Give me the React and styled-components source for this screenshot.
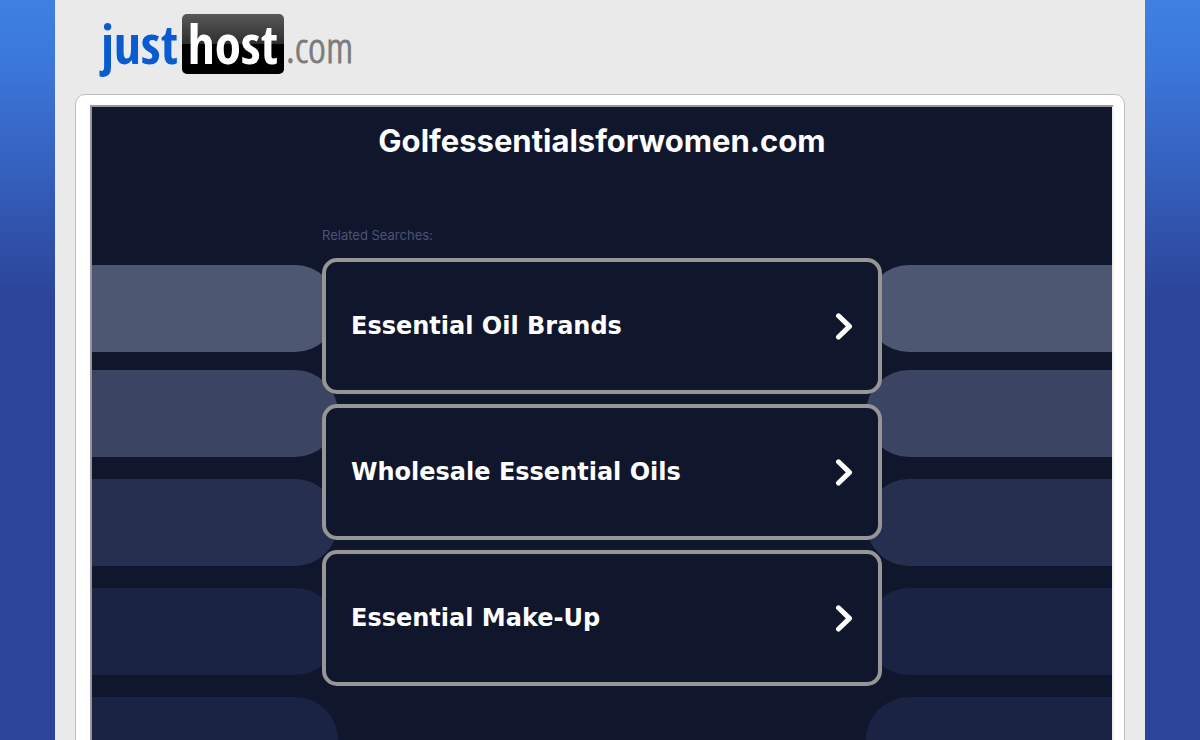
import styled, { createGlobalStyle } from "styled-components";

const GlobalStyle = createGlobalStyle`
  * {
    box-sizing: border-box;
  }

  body {
    margin: 0;
    background-color: #2c4499;
  }
`;

const Page = styled.div`
  display: flex;
  height: 100vh;
  overflow: hidden;
  padding: 0 55px;
  background: linear-gradient(#3f80e3 0, #3c78dc 60px, #2c4499 300px);
`;

const Shell = styled.div`
  flex: 1;
  min-width: 0;
  max-width: 1280px;
  margin: 0 auto;
  padding: 14px 20px 0;
  background-color: #eaeaea;
`;

const Logo = styled.a`
  display: flex;
  height: 60px;
  margin: 0 0 20px 26px;
  font-family: "Open Sans Condensed", "DejaVu Sans Condensed", sans-serif;
  font-size: 53px;
  font-weight: 500;
  line-height: 60px;
  text-decoration: none;
`;

const LogoJust = styled.span`
  color: #0a5bd0;
  margin-right: 4px;
`;

const LogoHost = styled.span`
  padding: 0 6px;
  border-radius: 5px;
  color: #fff;
  background: linear-gradient(#585858 0, #2e2e2e 50%, #000 50%);
`;

const LogoCom = styled.span`
  margin-left: 2px;
  color: #7c7c7c;
  font-family: "Open Sans Condensed Light", "DejaVu Sans Condensed", sans-serif;
  font-size: 43px;
  font-weight: 400;
  line-height: 66px;
  -webkit-text-stroke: 1px #7c7c7c;
`;

const Card = styled.main`
  padding: 10px 10px 10px 14px;
  border: 1px solid #bebebe;
  border-radius: 10px;
  background-color: #fff;
`;

const Frame = styled.div`
  position: relative;
  min-height: 760px;
  border: 2px solid;
  border-color: #94969a #eee #eee #94969a;
  background-color: #10162b;
`;

/* striped pills behind the list */
const Backdrop = styled.div`
  position: absolute;
  inset: 0;
  overflow: hidden;
  display: flex;
  flex-direction: column;
  gap: 22px;
  padding-top: 158px;
`;

const Stripe = styled.div`
  flex: none;
  display: flex;
  justify-content: space-between;
  height: 87px;
  margin-bottom: ${(props) => (props.$tight ? "-4px" : "0")};

  &::before,
  &::after {
    content: "";
    width: calc(50% - 264px);
    background-color: ${(props) => props.$color};
  }

  &::before {
    border-radius: 0 43px 43px 0;
  }

  &::after {
    border-radius: 43px 0 0 43px;
  }
`;

const Content = styled.div`
  position: relative;
  max-width: 560px;
  margin: 0 auto;
  padding-top: 14px;
`;

const Title = styled.h1`
  margin: 0 0 66px;
  color: #fff;
  font-family: Inter, sans-serif;
  font-size: 31px;
  font-weight: 700;
  line-height: 40px;
  text-align: center;
`;

const Label = styled.p`
  margin: 0 0 15px;
  color: #4d5478;
  font-family: Inter, sans-serif;
  font-size: 13px;
  line-height: 16px;
`;

const List = styled.ul`
  display: flex;
  flex-direction: column;
  gap: 10px;
  margin: 0;
  padding: 0;
  list-style: none;
`;

const SearchLink = styled.a`
  display: flex;
  align-items: center;
  justify-content: space-between;
  height: 136px;
  padding: 0 25px;
  border: 4px solid #969696;
  border-radius: 15px;
  background-color: #10162b;
  color: #fff;
  font-family: "DejaVu Sans", sans-serif;
  font-size: 24px;
  font-weight: 700;
  text-decoration: none;
`;

const stripes = ["#4e5772", "#3b4462", "#262f4f", "#1b2344", "#1b2344"];

const searches = [
  "Essential Oil Brands",
  "Wholesale Essential Oils",
  "Essential Make-Up",
];

function Chevron() {
  return (
    <svg width="18" height="28" viewBox="0 0 18 28" fill="none" aria-hidden="true">
      <path
        d="M3.5 3.8L14.5 14.4L3.5 25"
        stroke="#fff"
        strokeWidth="5"
        strokeLinecap="round"
        strokeLinejoin="round"
      />
    </svg>
  );
}

function App() {
  return (
    <Page>
      <GlobalStyle />
      <Shell>
        <Logo href="#">
          <LogoJust>just</LogoJust>
          <LogoHost>host</LogoHost>
          <LogoCom>.com</LogoCom>
        </Logo>
        <Card>
          <Frame>
            <Backdrop>
              {stripes.map((color, i) => (
                <Stripe key={i} $color={color} $tight={i === 0} />
              ))}
            </Backdrop>
            <Content>
              <Title>Golfessentialsforwomen.com</Title>
              <Label>Related Searches:</Label>
              <List>
                {searches.map((text) => (
                  <li key={text}>
                    <SearchLink href="#">
                      {text}
                      <Chevron />
                    </SearchLink>
                  </li>
                ))}
              </List>
            </Content>
          </Frame>
        </Card>
      </Shell>
    </Page>
  );
}

export default App;
